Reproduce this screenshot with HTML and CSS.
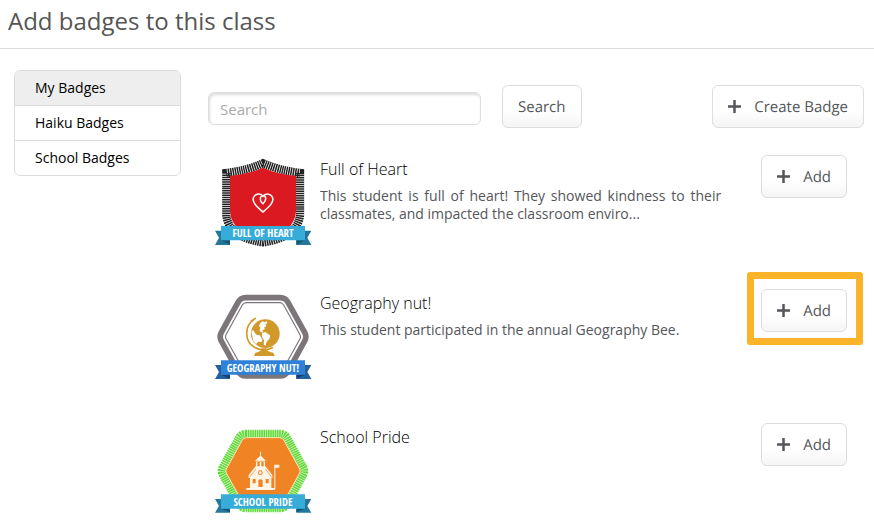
FILE: index.html
```html
<!DOCTYPE html>
<html lang="en">
<head>
    <meta charset="utf-8">
    <title>Add badges to this class</title>
    <link rel="stylesheet" href="styles.css">
</head>
<body>
<header class="header">
    <h1>Add badges to this class</h1>
</header>
<div class="page">
    <nav class="side">
        <ul>
            <li class="current"><a href="#my">My Badges</a></li>
            <li><a href="#haiku">Haiku Badges</a></li>
            <li><a href="#school">School Badges</a></li>
        </ul>
    </nav>
    <main class="main">
        <div class="tools">
            <form class="search">
                <input type="search" placeholder="Search" aria-label="Search badges">
                <button type="button" class="btn">Search</button>
            </form>
            <button type="button" class="btn">
                <svg class="plus" viewBox="0 0 13 13"><path d="M6.5 0v13M0 6.5h13"/></svg>Create Badge
            </button>
        </div>
        <ul class="list">
            <li class="badge">
                <svg class="pic" viewBox="27 15 300 285" role="img" aria-label="Full of Heart badge">
                    <path fill="#fff" d="M174 40 Q220 60 280 69 V195 Q278 262 174 278 Q70 262 68 195 V69 Q130 60 174 40Z"/>
                    <path fill="none" stroke="#222" stroke-width="25" stroke-dasharray="4.5 2.2" d="M174 40 Q220 60 285 69 V195 Q278 262 174 277 Q70 262 64 195 V69 Q130 60 174 40Z"/>
                    <path fill="#db1920" d="M174 53 Q215 72 273 78 V185 Q271 215 245 240 H103 Q77 215 75 185 V78 Q133 72 174 53Z"/>
                    <path fill="none" stroke="#fff" stroke-width="4.5" stroke-linecap="round" stroke-linejoin="round" d="M174 161 C181 154 184 145 180 139 Q174 134 168 140 C163 148 169 159 174 161 M174 139 C182 128 198 131 203 143 C208 158 190 172 174 186 C158 172 141 158 145 144 C150 130 167 128 174 139"/>
                    <path fill="#23779d" d="M30 242 H75 V285 H30 L42 263Z M319 242 H274 V285 H319 L307 263Z"/>
                    <path fill="#165675" d="M48 271 H75 V284Z M300 271 H274 V284Z"/>
                    <path fill="#38acd9" d="M48 228 H300 V271 H48Z"/>
                    <text class="label" x="174" y="262">FULL OF HEART</text>
                </svg>
                <div class="info">
                    <h2>Full of Heart</h2>
                    <p>This student is full of heart! They showed kindness to their classmates, and impacted the classroom enviro...</p>
                </div>
                <div class="act">
                    <button type="button" class="btn"><svg class="plus" viewBox="0 0 13 13"><path d="M6.5 0v13M0 6.5h13"/></svg>Add</button>
                </div>
            </li>
            <li class="badge">
                <svg class="pic" viewBox="27 12 300 285" role="img" aria-label="Geography nut badge">
                    <path fill="#fff" stroke="#7c757a" stroke-width="17" stroke-linejoin="round" d="M122 38 H226 Q241 38 249 52 L299 142 Q306 155 299 168 L249 259 Q241 273 226 273 H122 Q107 273 99 259 L49 168 Q42 155 49 142 L99 52 Q107 38 122 38Z"/>
                    <path fill="none" stroke="#7c757a" stroke-width="3.5" stroke-linejoin="round" d="M124 53 H224 Q232 53 236 60 L285 149 Q288 155 285 161 L236 250 Q232 257 224 257 H124 Q116 257 112 250 L63 161 Q60 155 63 149 L112 60 Q116 53 124 53Z"/>
                    <circle cx="181" cy="146" r="43" fill="#d1992a"/>
                    <path fill="#fff" d="M139 139 L145 136 L150 145 L157 151 L163 150 L168 157 L172 164 L169 171 L160 170 L153 177 L145 168Z M166 114 L172 109 L180 112 L186 108 L187 115 L181 118 L184 124 L178 127 L179 133 L172 136 L175 142 L168 142 L164 137 L166 128 L162 122Z M171 145 L181 141 L188 146 L196 152 L193 162 L186 169 L181 183 L176 178 L177 165 L171 157Z"/>
                    <path fill="none" stroke="#d1992a" stroke-width="5" stroke-linecap="round" d="M148 103 C116 123 119 171 148 187 Q174 202 202 188 M139 108 L151 100"/>
                    <path fill="#d1992a" d="M170 190 H184 Q184 200 205 203 L209 213 H147 L151 203 Q170 200 170 190Z"/>
                    <path fill="#245f9f" d="M30 240 H75 V282 H30 L42 261Z M319 240 H274 V282 H319 L307 261Z"/>
                    <path fill="#173f70" d="M48 269 H75 V281Z M300 269 H274 V281Z"/>
                    <path fill="#2f81d8" d="M48 226 H300 V269 H48Z"/>
                    <text class="label" x="174" y="260">GEOGRAPHY NUT!</text>
                </svg>
                <div class="info">
                    <h2>Geography nut!</h2>
                    <p>This student participated in the annual Geography Bee.</p>
                </div>
                <div class="act marked">
                    <button type="button" class="btn"><svg class="plus" viewBox="0 0 13 13"><path d="M6.5 0v13M0 6.5h13"/></svg>Add</button>
                </div>
            </li>
            <li class="badge">
                <svg class="pic" viewBox="27 9 300 285" role="img" aria-label="School Pride badge">
                    <path fill="#d5f7c4" stroke="#d5f7c4" stroke-width="20" d="M122 42 H226 Q239 42 246 54 L294 141 Q301 153 294 165 L246 252 Q239 264 226 264 H122 Q109 264 102 252 L54 165 Q47 153 54 141 L102 54 Q109 42 122 42Z"/>
                    <path fill="none" stroke="#62d93a" stroke-width="25" stroke-dasharray="4.5 2.2" d="M122 42 H226 Q239 42 246 54 L294 141 Q301 153 294 165 L246 252 Q239 264 226 264 H122 Q109 264 102 252 L54 165 Q47 153 54 141 L102 54 Q109 42 122 42Z"/>
                    <path fill="#f08425" stroke="#fbe3b0" stroke-width="3" d="M124 53 H224 Q232 53 236 60 L284 147 Q287 153 284 159 L236 246 Q232 253 224 253 H124 Q116 253 112 246 L64 159 Q61 153 64 147 L112 60 Q116 53 124 53Z"/>
                    <g fill="#fff4e6">
                        <path d="M165 95 H168 V108 L184 124 H180 V137 L202 165 V174 H199 V204 H210 V210 H124 V204 H135 V174 H131 V165 L153 137 V124 H149 L165 108Z"/>
                        <path d="M208 134 H223 V143 H211 V207 H208Z"/>
                    </g>
                    <path fill="#f08425" d="M157 126 H164 V139 H157Z M169 126 H176 V139 H169Z M160 181 Q166 174 173 181 V201 H160Z M143 177 H152 V190 H143Z M182 177 H191 V190 H182Z"/>
                    <circle cx="166" cy="158" r="7" fill="#f08425"/>
                    <circle cx="166" cy="158" r="4" fill="#fff4e6"/>
                    <path fill="none" stroke="#f08425" stroke-width="2" d="M149 124 H184 M134 171 L153 147 M200 171 L181 147"/>
                    <path fill="#23779d" d="M30 237 H75 V278 H30 L42 258Z M319 237 H274 V278 H319 L307 258Z"/>
                    <path fill="#165675" d="M48 266 H75 V277Z M300 266 H274 V277Z"/>
                    <path fill="#38acd9" d="M48 223 H300 V266 H48Z"/>
                    <text class="label" x="174" y="257">SCHOOL PRIDE</text>
                </svg>
                <div class="info">
                    <h2>School Pride</h2>
                </div>
                <div class="act">
                    <button type="button" class="btn"><svg class="plus" viewBox="0 0 13 13"><path d="M6.5 0v13M0 6.5h13"/></svg>Add</button>
                </div>
            </li>
        </ul>
    </main>
</div>
</body>
</html>
```
FILE: styles.css
```css
*{padding:0; margin:0; box-sizing:border-box;}
body{background:#fff; color:#000; font:14px/18px "Open Sans", sans-serif;}
ul{list-style:none;}
a{color:inherit; text-decoration:none;}

.header{height:49px; padding:4px 8px; border-bottom:1px solid #ddd;}
.header h1{font-size:24px; line-height:34px; font-weight:400; color:#555;}

.page{display:flex; align-items:flex-start; gap:27px; padding:21px 10px 0 14px;}

.side{width:167px; flex:none; border:1px solid #ddd; border-radius:6px; overflow:hidden;}
.side li + li{border-top:1px solid #ddd;}
.side a{display:block; padding:0 20px; line-height:34px;}
.side .current{background:#eee;}

.main{flex:1; min-width:0; padding-top:15px;}
.tools{display:flex; justify-content:space-between;}
.search{display:flex; align-items:flex-end; gap:21px;}
.search input{width:273px; height:33px; margin-bottom:3px; padding:0 11px; border:1px solid #ddd; border-radius:6px; box-shadow:inset 1px 2px 3px #ddd; background:#fff; font:15px "Open Sans", sans-serif; color:#555; appearance:none;}
.search input::placeholder{color:#aaa;}

.btn{display:flex; align-items:center; height:43px; padding:0 15px; border:1px solid #ddd; border-radius:6px; background:linear-gradient(#fff 60%, #f5f5f5); color:#54565a; font:15px "Open Sans", sans-serif; text-rendering:geometricPrecision; white-space:nowrap; cursor:pointer;}
.plus{width:13px; height:13px; margin-right:13px; fill:none; stroke:#54565a; stroke-width:2.5;}

.list{display:flex; flex-direction:column; gap:39px; padding:27px 17px 0 6px;}
.badge{display:flex; align-items:flex-start;}
.pic{width:100px; height:95px; flex:none;}
.label{fill:#fff; font:bold 32px "Liberation Sans Narrow", "Open Sans Condensed", "Roboto Condensed", sans-serif; text-anchor:middle;}
.info{flex:1; padding:2px 40px 0 6px;}
.info h2{font-size:16px; line-height:24px; font-weight:300;}
.info p{margin-top:6px; color:#54565a; text-align:justify;}

.act{position:relative;}
/* frame round the highlighted button */
.marked::after{content:""; position:absolute; top:-17px; right:-16px; bottom:-13px; left:-14px; border:7px solid #fbb429; border-radius:3px; pointer-events:none;}
```
